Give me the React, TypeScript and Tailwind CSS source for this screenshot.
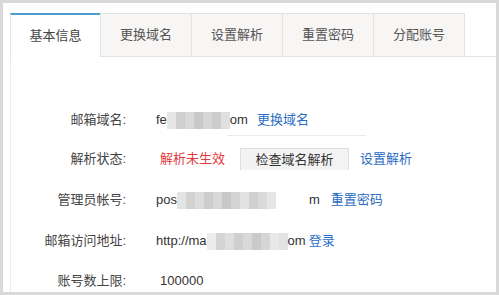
import React from "react";

const tabs = ["基本信息", "更换域名", "设置解析", "重置密码", "分配账号"];

const Blur = ({ cells }: { cells: string[] }) => (
    <span className="inline-flex h-[17px] items-stretch">
        {cells.map((c, i) => (
            <span key={i} className="w-[9px]" style={{ background: c }} />
        ))}
    </span>
);

const Row = ({ label, h, children }: { label: string; h: string; children: React.ReactNode }) => (
    <div className={`flex items-center ${h}`}>
        <div className="w-[115px] text-right text-[#444]">{label}</div>
        <div className="ml-[30px] flex items-center text-[#333]">{children}</div>
    </div>
);

const App = () => {
    return (
        <div
            className="w-[499px] h-[295px] border-[3px] border-[#d9d9d9] bg-white overflow-hidden text-[13px]"
            style={{ fontFamily: '"Liberation Sans", "Noto Sans CJK SC", sans-serif' }}
        >
            <div className="pl-[7px] pt-[10px] h-full">
                <div className="flex h-[44px] shrink-0">
                    {tabs.map((t, i) =>
                        i === 0 ? (
                            <div
                                key={t}
                                className="w-[90px] flex items-center justify-center border-t-2 border-t-[#4b9fcb] border-l border-l-[#e3e3e3] bg-white text-[#444]"
                            >
                                {t}
                            </div>
                        ) : (
                            <div
                                key={t}
                                className="w-[91px] flex items-center justify-center border-t border-l border-b border-[#e3e3e3] bg-[#f8f6f5] text-[#555]"
                            >
                                {t}
                            </div>
                        )
                    )}
                    <div className="flex-1 border-l border-b border-[#e3e3e3]" />
                </div>
                <div className="h-[240px] border-l border-[#e8ecf0] pt-[44px]">
                    <Row label="邮箱域名:" h="h-[38px]">
                        <div className="relative flex items-center">
                            <span>fe</span>
                            <Blur cells={["#e6e6e6", "#cfcfcf", "#d9d9d9", "#c9c9c9", "#d6d6d6", "#cccccc", "#e0e0e0"]} />
                            <span>om</span>
                            <span className="ml-[9px] text-[#2b6cc4]">更换域名</span>
                            <span className="absolute left-[71px] top-[25px] w-[139px] h-px bg-[#ececec]" />
                        </div>
                    </Row>
                    <Row label="解析状态:" h="h-[40px]">
                        <span className="ml-[4px] text-[#e3393c]">解析未生效</span>
                        <span className="ml-[15px] w-[109px] h-[22px] flex items-center justify-center bg-[#f3f3f3] border-t border-x border-[#dedede] text-[#333]">
                            检查域名解析
                        </span>
                        <span className="ml-[11px] text-[#2b6cc4]">设置解析</span>
                    </Row>
                    <Row label="管理员帐号:" h="h-[42px]">
                        <span>pos</span>
                        <Blur cells={["#e4e4e4", "#d2d2d2", "#dcdcdc", "#cdcdcd", "#d8d8d8", "#c8c8c8", "#d4d4d4", "#e2e2e2", "#d0d0d0", "#dadada", "#e6e6e6"]} />
                        <span className="ml-[33px]">m</span>
                        <span className="ml-[11px] text-[#2b6cc4]">重置密码</span>
                    </Row>
                    <Row label="邮箱访问地址:" h="h-[40px]">
                        <span>http://ma</span>
                        <Blur cells={["#ececec", "#d4d4d4", "#dedede", "#cfcfcf", "#d9d9d9", "#cacaca", "#d6d6d6", "#e8e8e8", "#e2e2e2"]} />
                        <span>om</span>
                        <span className="ml-[3px] text-[#2b6cc4]">登录</span>
                    </Row>
                    <Row label="账号数上限:" h="h-[40px]">
                        <span className="ml-[4px]">100000</span>
                    </Row>
                </div>
            </div>
        </div>
    );
};

export default App;
